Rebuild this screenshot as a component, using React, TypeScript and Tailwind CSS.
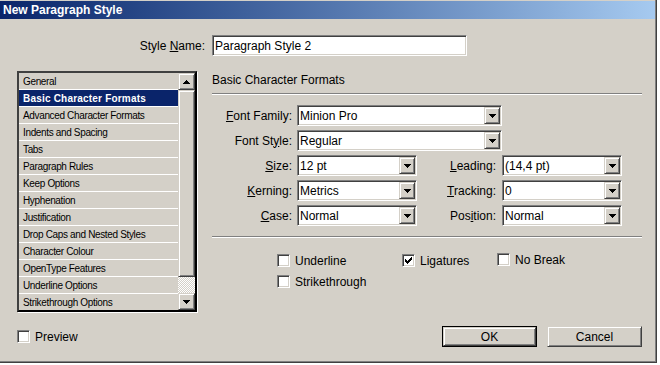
import React from "react";

const sunken =
  "border border-t-[#808080] border-l-[#808080] border-r-white border-b-white shadow-[inset_1px_1px_0_#404040,inset_-1px_-1px_0_#d4d0c8]";
const raised =
  "border border-t-[#d4d0c8] border-l-[#d4d0c8] border-r-[#404040] border-b-[#404040] shadow-[inset_1px_1px_0_#fff,inset_-1px_-1px_0_#808080]";

const sections = [
  "General",
  "Basic Character Formats",
  "Advanced Character Formats",
  "Indents and Spacing",
  "Tabs",
  "Paragraph Rules",
  "Keep Options",
  "Hyphenation",
  "Justification",
  "Drop Caps and Nested Styles",
  "Character Colour",
  "OpenType Features",
  "Underline Options",
  "Strikethrough Options",
];

const Arrow = ({ up }: { up?: boolean }) => (
  <svg width="7" height="4" viewBox="0 0 7 4" shapeRendering="crispEdges">
    <path d={up ? "M3 0h1v1h1v1h1v1h1v1H0V3h1V2h1V1h1z" : "M0 0h7v1H6v1H5v1H4v1H3V3H2V2H1V1H0z"} fill="#000" />
  </svg>
);

const DropButton = () => (
  <span className={`${raised} flex h-[17px] w-[16px] shrink-0 items-center justify-center bg-[#d4d0c8]`}>
    <Arrow />
  </span>
);

const Combo = ({ value, width }: { value: string; width: string }) => (
  <div className={`${sunken} ${width} flex h-[21px] items-center bg-white p-[1px]`}>
    <span className="flex-1 pl-[1px] leading-none">{value}</span>
    <DropButton />
  </div>
);

const Check = ({ checked }: { checked?: boolean }) => (
  <span className={`${sunken} flex h-[13px] w-[13px] shrink-0 items-center justify-center bg-white`}>
    {checked && (
      <svg width="7" height="7" viewBox="0 0 7 7" shapeRendering="crispEdges">
        <path d="M6 0h1v3H6v1H5v1H4v1H3v1H2V6H1V5H0V2h1v1h1v1h1V3h1V2h1V1h1z" fill="#000" />
      </svg>
    )}
  </span>
);

const Label = ({ children, width }: { children: React.ReactNode; width: string }) => (
  <span className={`${width} shrink-0 text-right`}>{children}</span>
);

const CheckItem = ({ label, checked }: { label: string; checked?: boolean }) => (
  <div className="flex h-[13px] items-center gap-[5px]">
    <Check checked={checked} />
    <span className="leading-none">{label}</span>
  </div>
);

export default function App() {
  return (
    <div className="h-[365px] w-[660px] bg-white font-['Liberation_Sans',Arial,sans-serif] text-[12px] text-black">
      <div className="flex h-[363px] w-[657px] flex-col border-r border-b border-[#404040] bg-[#d4d0c8] pt-[1px] shadow-[inset_-1px_-1px_0_#808080]">
        {/* title bar */}
        <div className="mr-[1px] h-[18px] bg-gradient-to-r from-[#0a246a] to-[#a6caf0] pl-[3px] text-[12px] leading-[18px] font-bold text-white">
          New Paragraph Style
        </div>

        {/* style name */}
        <div className="mt-[16px] flex h-[21px] items-center gap-[7px]">
          <Label width="w-[205px]">
            Style <u>N</u>ame:
          </Label>
          <div className={`${sunken} flex h-[21px] w-[255px] items-center bg-white pl-[2px]`}>
            Paragraph Style 2
          </div>
        </div>

        <div className="mt-[15px] flex pl-[17px]">
          {/* section list */}
          <div className="flex h-[241px] w-[180px] border-2 border-t-[#404040] border-l-[#404040] border-r-black border-b-black shadow-[1px_1px_0_#fff]">
            <div className="flex-1 overflow-hidden">
              {sections.map((s, i) => (
                <div
                  key={s}
                  className={
                    i === 1
                      ? "flex h-[17px] items-center border-b border-white bg-[#0a246a] pl-[4px] text-[10px] font-bold tracking-[0.2px] text-white"
                      : "flex h-[17px] items-center border-b border-white pl-[4px] text-[10px] tracking-[-0.35px]"
                  }
                >
                  {s}
                </div>
              ))}
            </div>
            <div className="flex w-[17px] flex-col">
              <span className={`${raised} flex h-[17px] items-center justify-center`}>
                <Arrow up />
              </span>
              <span className={`${raised} h-[187px]`} />
              <span className="h-[16px] bg-[repeating-conic-gradient(#fff_0%_25%,#d4d0c8_0%_50%)] bg-[length:2px_2px]" />
              <span className={`${raised} flex h-[17px] items-center justify-center`}>
                <Arrow />
              </span>
            </div>
          </div>

          {/* right panel */}
          <div className="ml-[15px] flex w-[430px] flex-col">
            <div className="mt-[2px] h-[14px] leading-[14px]">Basic Character Formats</div>
            <div className="mt-[6px] h-[2px] border-t border-b border-t-[#808080] border-b-white" />

            <div className="mt-[10px] flex flex-col gap-[4px]">
              <div className="flex items-center gap-[5px]">
                <Label width="w-[80px]">
                  <u>F</u>ont Family:
                </Label>
                <Combo value="Minion Pro" width="w-[205px]" />
              </div>
              <div className="flex items-center gap-[5px]">
                <Label width="w-[80px]">
                  Font St<u>y</u>le:
                </Label>
                <Combo value="Regular" width="w-[205px]" />
              </div>
              <div className="flex items-center">
                <Label width="w-[80px]">
                  <u>S</u>ize:
                </Label>
                <span className="ml-[5px]">
                  <Combo value="12 pt" width="w-[120px]" />
                </span>
                <Label width="w-[79px]">
                  <u>L</u>eading:
                </Label>
                <span className="ml-[6px]">
                  <Combo value="(14,4 pt)" width="w-[120px]" />
                </span>
              </div>
              <div className="flex items-center">
                <Label width="w-[80px]">
                  <u>K</u>erning:
                </Label>
                <span className="ml-[5px]">
                  <Combo value="Metrics" width="w-[120px]" />
                </span>
                <Label width="w-[79px]">
                  <u>T</u>racking:
                </Label>
                <span className="ml-[6px]">
                  <Combo value="0" width="w-[120px]" />
                </span>
              </div>
              <div className="flex items-center">
                <Label width="w-[80px]">
                  <u>C</u>ase:
                </Label>
                <span className="ml-[5px]">
                  <Combo value="Normal" width="w-[120px]" />
                </span>
                <Label width="w-[79px]">
                  Pos<u>i</u>tion:
                </Label>
                <span className="ml-[6px]">
                  <Combo value="Normal" width="w-[120px]" />
                </span>
              </div>
            </div>

            <div className="mt-[10px] h-[2px] border-t border-b border-t-[#808080] border-b-white" />

            <div className="mt-[16px] flex pl-[65px]">
              <div className="flex w-[125px] flex-col gap-[8px]">
                <CheckItem label="Underline" />
                <CheckItem label="Strikethrough" />
              </div>
              <div className="w-[95px]">
                <CheckItem label="Ligatures" checked />
              </div>
              <div className="-mt-[1px]">
                <CheckItem label="No Break" />
              </div>
            </div>
          </div>
        </div>

        {/* footer */}
        <div className="mt-[14px] flex items-center pl-[17px]">
          <CheckItem label="Preview" />
          <div className="ml-auto mr-[14px] flex gap-[10px]">
            <button className="h-[21px] w-[95px] border border-black">
              <span className={`${raised} flex h-full w-full items-center justify-center`}>OK</span>
            </button>
            <button className={`${raised} flex h-[21px] w-[95px] items-center justify-center`}>Cancel</button>
          </div>
        </div>
      </div>
    </div>
  );
}
